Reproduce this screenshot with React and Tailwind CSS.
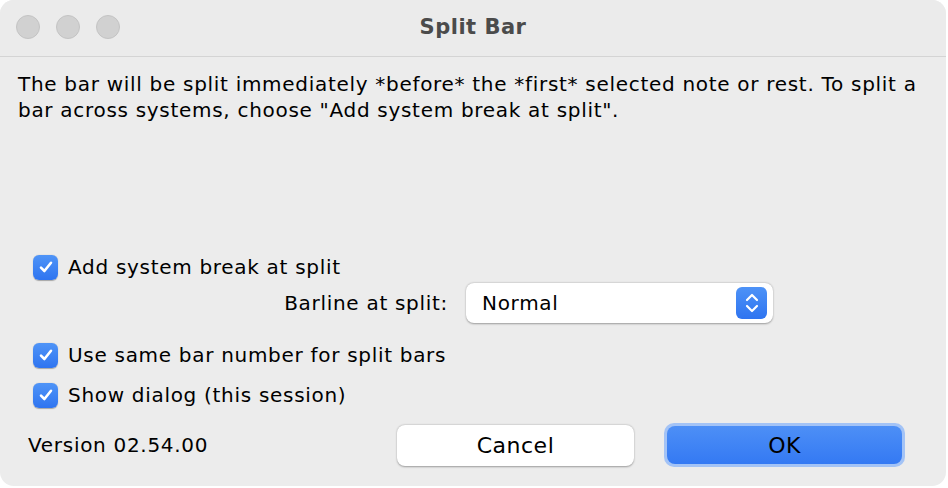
import React from "react";

const font = { fontFamily: '"DejaVu Sans", "Noto Sans", sans-serif' };

function Check({ label }) {
  return (
    <label className="flex h-[28px] items-center gap-[10px]">
      <span className="flex h-[25px] w-[25px] items-center justify-center rounded-[6px] bg-gradient-to-b from-[#4f94f7] to-[#2f74f0] shadow-[0_0.5px_1px_rgba(0,0,0,0.3)]">
        <svg width="16" height="16" viewBox="0 0 16 16" fill="none">
          <path d="M3 8.6 L6.4 12 L13 3.8" stroke="white" strokeWidth="2.6" strokeLinecap="round" strokeLinejoin="round" />
        </svg>
      </span>
      <span>{label}</span>
    </label>
  );
}

export default function App() {
  return (
    <div className="h-[488px] w-[948px] bg-white text-black" style={font}>
      <div className="flex h-[486px] w-[946px] flex-col overflow-hidden rounded-[14px] bg-[#ececec] text-[20px] tracking-[0.7px]">
        {/* title bar */}
        <div className="relative flex h-[57px] shrink-0 items-center justify-center border-b border-[#d4d4d4] bg-[#ebebeb]">
          <div className="absolute left-[16px] top-[15px] flex gap-[16px]">
            <span className="h-[24px] w-[24px] rounded-full border border-[#c4c4c4] bg-[#d1d1d1]" />
            <span className="h-[24px] w-[24px] rounded-full border border-[#c4c4c4] bg-[#d1d1d1]" />
            <span className="h-[24px] w-[24px] rounded-full border border-[#c4c4c4] bg-[#d1d1d1]" />
          </div>
          <span className="text-[21px] font-bold tracking-[0.5px] text-[#4b4b4b]">Split Bar</span>
        </div>

        {/* message */}
        <p className="pl-[18px] pr-[10px] pt-[14px] leading-[26px]">
          The bar will be split immediately *before* the *first* selected note or rest. To split a bar across systems, choose "Add system break at split".
        </p>

        {/* options */}
        <div className="mt-[130px] flex flex-col pl-[33px]">
          <Check label="Add system break at split" />
          <div className="mt-[2px] flex h-[40px] items-center">
            <span className="w-[415px] text-right">Barline at split:</span>
            <div className="ml-[18px] flex h-[40px] w-[307px] items-center justify-between rounded-[8px] bg-white pl-[16px] pr-[6px] shadow-[0_0.5px_2px_rgba(0,0,0,0.35)]">
              <span>Normal</span>
              <span className="flex h-[32px] w-[31px] items-center justify-center rounded-[6px] bg-gradient-to-b from-[#4d92f7] to-[#2f74f0]">
                <svg width="16" height="22" viewBox="0 0 16 22" fill="none">
                  <path d="M3 8 L8 3 L13 8 M3 14 L8 19 L13 14" stroke="white" strokeWidth="2.2" strokeLinecap="round" strokeLinejoin="round" />
                </svg>
              </span>
            </div>
          </div>
          <div className="mt-[18px] flex flex-col gap-[12px]">
            <Check label="Use same bar number for split bars" />
            <Check label="Show dialog (this session)" />
          </div>
        </div>

        {/* footer */}
        <div className="mt-[14px] flex h-[44px] items-center pl-[28px]">
          <span className="w-[369px]">Version 02.54.00</span>
          <button className="h-[41px] w-[237px] rounded-[8px] bg-white text-[22px] tracking-[0.5px] shadow-[0_0.5px_2px_rgba(0,0,0,0.35)]">
            Cancel
          </button>
          <button className="ml-[30px] h-[44px] w-[241px] rounded-[10px] bg-[#a3c3f6] p-[3px]">
            <span className="flex h-full w-full items-center justify-center rounded-[8px] bg-gradient-to-b from-[#4d8ff6] to-[#3479f3] text-[22px] tracking-[0.5px]">
              OK
            </span>
          </button>
        </div>
      </div>
    </div>
  );
}
